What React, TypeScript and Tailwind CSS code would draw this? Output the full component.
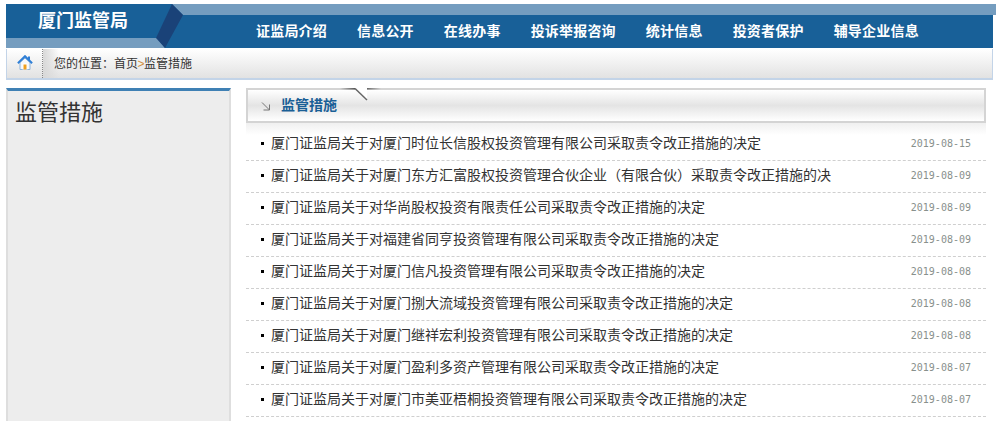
const NAV = ['证监局介绍', '信息公开', '在线办事', '投诉举报咨询', '统计信息', '投资者保护', '辅导企业信息']

const ROWS = [
  { title: '厦门证监局关于对厦门时位长信股权投资管理有限公司采取责令改正措施的决定', date: '2019-08-15' },
  { title: '厦门证监局关于对厦门东方汇富股权投资管理合伙企业（有限合伙）采取责令改正措施的决', date: '2019-08-09' },
  { title: '厦门证监局关于对华尚股权投资有限责任公司采取责令改正措施的决定', date: '2019-08-09' },
  { title: '厦门证监局关于对福建省同亨投资管理有限公司采取责令改正措施的决定', date: '2019-08-09' },
  { title: '厦门证监局关于对厦门信凡投资管理有限公司采取责令改正措施的决定', date: '2019-08-08' },
  { title: '厦门证监局关于对厦门捌大流域投资管理有限公司采取责令改正措施的决定', date: '2019-08-08' },
  { title: '厦门证监局关于对厦门继祥宏利投资管理有限公司采取责令改正措施的决定', date: '2019-08-08' },
  { title: '厦门证监局关于对厦门盈利多资产管理有限公司采取责令改正措施的决定', date: '2019-08-07' },
  { title: '厦门证监局关于对厦门市美亚梧桐投资管理有限公司采取责令改正措施的决定', date: '2019-08-07' },
]

function HomeIcon() {
  return (
    <svg width="16" height="16" viewBox="0 0 16 16">
      <path d="M3 7.5v7h10v-7L8 3z" fill="#f6f8fb" stroke="#8fb4dc" strokeWidth="1" />
      <rect x="11" y="1.5" width="2" height="4" fill="#2f7fd6" />
      <path d="M0.9 8.2 8 1.2l7.1 7" fill="none" stroke="#2f7fd6" strokeWidth="2" />
      <rect x="5.5" y="8.5" width="5" height="6" fill="#fff" />
      <rect x="6.5" y="9.5" width="3" height="5" fill="#f0a020" />
    </svg>
  )
}

export default function App() {
  return (
    <div className="w-[999px] h-[421px] overflow-hidden bg-white px-[6px] pt-1 font-['Liberation_Sans','Noto_Sans_CJK_SC',sans-serif] text-[#333]">
      <header className="relative h-[44px] bg-[#186098] text-white font-bold">
        <svg className="absolute inset-0" width="990" height="44" viewBox="0 0 990 44">
          <polygon points="166,0 990,0 990,11 177,11" fill="#759dbf" />
          <polygon points="0,34 151,34 159,44 0,44" fill="#759dbf" />
          <polygon points="166,0 177,11 159,44 150,34" fill="#1a4278" />
        </svg>
        <div className="relative flex items-start">
          <div className="w-[250px] pl-[32px] pt-[5px] text-[18px] leading-[24px]">厦门监管局</div>
          <nav className="flex gap-[30px] pt-[17px] text-[14px] leading-[20px] tracking-[0.2px]">
            {NAV.map(item => (
              <a key={item}>{item}</a>
            ))}
          </nav>
        </div>
      </header>

      <div className="mt-px flex h-[31px] items-stretch border-x border-b-2 border-[#c3d4e8] bg-gradient-to-b from-white to-[#e2e2e2] text-[12px]">
        <div className="flex w-[35px] items-center justify-center pb-[2px]">
          <HomeIcon />
        </div>
        <div className="flex flex-1 items-center border-l border-dotted border-[#888]">
          <div className="flex h-full items-center bg-gradient-to-r from-[#d8d8d8] to-transparent to-[16px] pl-[11px] pr-4">
            您的位置：首页<span className="-mx-[0.5px] text-[#d09040]">&gt;</span>监管措施
          </div>
        </div>
      </div>

      <div className="mt-2 flex gap-[15px]">
        <aside className="h-[340px] w-[225px] border-x-2 border-[#dedede] border-t-[3px] border-t-[#3f80b4] bg-[#ededed] pl-[7px] pt-[7px] text-[22px] leading-[30px]">
          监管措施
        </aside>

        <main className="w-[740px]">
          <div className="relative flex h-[35px] items-center border-2 border-[#d4d4d4] bg-gradient-to-b from-white via-[#e4e4e4] to-white pl-[13px] text-[14px] font-bold text-[#1a5f96]">
            <svg className="mr-[10px]" width="10" height="10" viewBox="0 0 10 10">
              <path d="M1 1.5 8.5 9M8.5 3.5V9H2.5" fill="none" stroke="#777" strokeWidth="1" />
            </svg>
            监管措施
            <svg className="absolute -left-[2px] -top-[2px]" width="150" height="14" viewBox="0 0 150 14">
              <defs>
                <linearGradient id="notchLeft" x1="0" x2="1" y1="0" y2="0">
                  <stop offset="0" stopColor="#d4d4d4" />
                  <stop offset="1" stopColor="#555" />
                </linearGradient>
                <linearGradient id="notchRight" x1="0" x2="1" y1="0" y2="0">
                  <stop offset="0" stopColor="#666" />
                  <stop offset="1" stopColor="#d4d4d4" />
                </linearGradient>
              </defs>
              <polygon points="109,0 121,12 121,0" fill="#fff" />
              <rect x="94" y="0" width="15" height="1.5" fill="url(#notchLeft)" />
              <rect x="121" y="0" width="14" height="1.5" fill="url(#notchRight)" />
              <path d="M109 0.5 121 12" stroke="#666" strokeWidth="1.5" fill="none" />
            </svg>
          </div>
          <div className="-mb-[6px] h-[12px] bg-gradient-to-b from-[#f0f0f0] to-white" />
          <ul className="relative">
            {ROWS.map(row => (
              <li key={row.date + row.title} className="flex h-[32px] items-center border-b border-dashed border-[#cfcfcf] pb-[3px] pl-[15px] pr-[15px] text-[14px]">
                <span className="mr-[7px] h-[3px] w-[3px] bg-black" />
                <span className="flex-1 truncate">{row.title}</span>
                <span className="font-['DejaVu_Sans_Mono',monospace] text-[10px] text-[#88908c]">{row.date}</span>
              </li>
            ))}
          </ul>
        </main>
      </div>
    </div>
  )
}
